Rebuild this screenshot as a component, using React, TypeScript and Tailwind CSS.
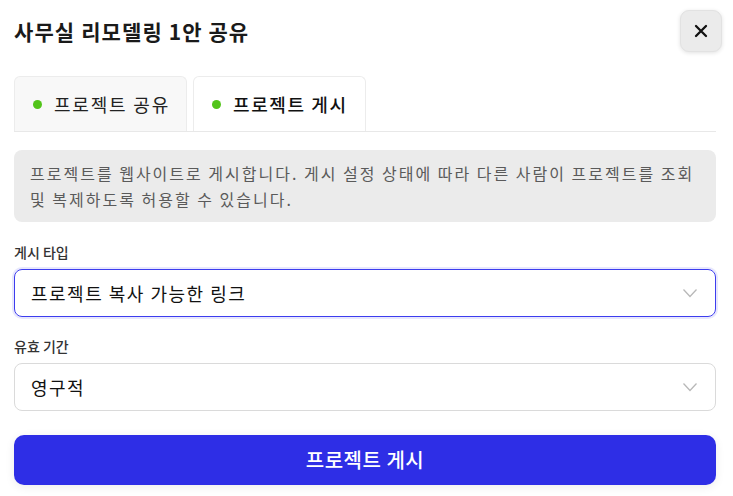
import React from "react";

const Chevron = () => (
  <svg width="16" height="10" viewBox="0 0 16 10" fill="none" className="shrink-0">
    <path d="M1.5 1.5L8 8.5L14.5 1.5" stroke="#b8b8b8" strokeWidth="1.3" />
  </svg>
);

const Dot = () => <span className="w-[9px] h-[9px] rounded-full bg-[#52c41a] shrink-0" />;

export default function App() {
  return (
    <div
      className="w-[733px] h-[496px] bg-white overflow-hidden pl-[14px] pr-[17px] text-[#1a1a1a]"
      style={{ fontFamily: '"Noto Sans CJK KR", "Noto Sans", sans-serif' }}
    >
      <div className="flex items-center justify-between pt-[10px] mr-[-6px]">
        <h1 className="text-[21px] font-bold leading-[42px] tracking-[1.1px] text-[#1a1a1a]">사무실 리모델링 1안 공유</h1>
        <button className="w-[42px] h-[42px] rounded-[9px] bg-[#ebebeb] border border-[#e2e2e2] shadow-[0_1px_4px_rgba(0,0,0,0.12)] flex items-center justify-center">
          <svg width="14" height="14" viewBox="0 0 14 14">
            <path d="M2 2L12 12M12 2L2 12" stroke="#111" strokeWidth="2.3" strokeLinecap="round" />
          </svg>
        </button>
      </div>

      <div className="mt-[24px] flex gap-[6px] border-b border-[#e8e8e8]">
        <div className="w-[173px] h-[55px] flex items-center gap-[12px] pl-[18px] bg-[#f8f8f8] border border-b-0 border-[#ececec] rounded-t-[6px]">
          <Dot />
          <span className="text-[18px] tracking-[1.8px] text-[#222]">프로젝트 공유</span>
        </div>
        <div className="w-[173px] h-[55px] flex items-center gap-[12px] pl-[18px] bg-white border border-b-0 border-[#ececec] rounded-t-[6px]">
          <Dot />
          <span className="text-[18px] font-medium tracking-[1.6px] text-[#111]">프로젝트 게시</span>
        </div>
      </div>

      <div className="mt-[18px] bg-[#ebebeb] rounded-[8px] pl-4 pr-[14px] py-[10px] text-[16px] leading-[26px] tracking-[2px] text-[#5a5a5a]">
        프로젝트를 웹사이트로 게시합니다. 게시 설정 상태에 따라 다른 사람이 프로젝트를 조회 및 복제하도록 허용할 수 있습니다.
      </div>

      <div className="mt-[20px] text-[14px] leading-[20px] font-medium text-[#333]">게시 타입</div>
      <div className="mt-[7px] h-[48px] rounded-[8px] border border-[#3d3dee] shadow-[0_0_0_2px_rgba(61,61,238,0.12)] flex items-center justify-between pl-[16px] pr-[17px]">
        <span className="text-[18px] tracking-[1.5px] text-[#111]">프로젝트 복사 가능한 링크</span>
        <Chevron />
      </div>

      <div className="mt-[19px] text-[14px] leading-[20px] font-medium text-[#333]">유효 기간</div>
      <div className="mt-[7px] h-[48px] rounded-[8px] border border-[#dadada] flex items-center justify-between pl-[16px] pr-[17px]">
        <span className="text-[18px] tracking-[1.5px] text-[#111]">영구적</span>
        <Chevron />
      </div>

      <button className="mt-[24px] w-full h-[50px] rounded-[10px] bg-[#2e2ee6] text-white text-[20px] font-medium tracking-[0.5px] shadow-[0_2px_10px_rgba(0,0,0,0.08)]">
        프로젝트 게시
      </button>
    </div>
  );
}
